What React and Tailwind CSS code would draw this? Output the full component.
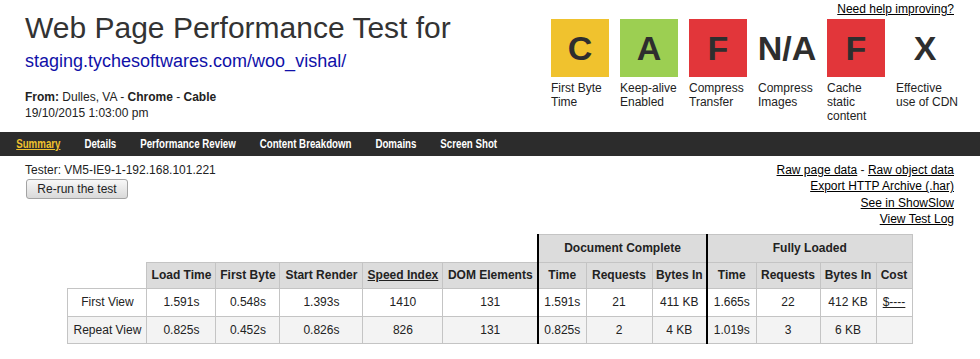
const grades = [
  { letter: 'C', bg: 'bg-[#f0c22e]', label: ['First Byte', 'Time'] },
  { letter: 'A', bg: 'bg-[#9ccf52]', label: ['Keep-alive', 'Enabled'] },
  { letter: 'F', bg: 'bg-[#e2363a]', label: ['Compress', 'Transfer'] },
  { letter: 'N/A', bg: '', label: ['Compress', 'Images'] },
  { letter: 'F', bg: 'bg-[#e2363a]', label: ['Cache', 'static', 'content'] },
  { letter: 'X', bg: '', label: ['Effective', 'use of CDN'] },
]

const tabs = ['Summary', 'Details', 'Performance Review', 'Content Breakdown', 'Domains', 'Screen Shot']

const rows = [
  {
    name: 'First View',
    bg: 'bg-white',
    h: 'h-[28px]',
    cells: ['1.591s', '0.548s', '1.393s', '1410', '131', '1.591s', '21', '411 KB', '1.665s', '22', '412 KB'],
    cost: true,
  },
  {
    name: 'Repeat View',
    bg: 'bg-[#f3f3f3]',
    h: 'h-[27px]',
    cells: ['0.825s', '0.452s', '0.826s', '826', '131', '0.825s', '2', '4 KB', '1.019s', '3', '6 KB'],
    cost: false,
  },
]

const widths = [79, 69, 64, 83, 80, 95, 48, 66, 55, 49, 64, 56, 36]

function cellBorder(i) {
  // thick black line in front of Document Complete and Fully Loaded
  if (i === 5 || i === 8) return 'border border-[#c4c4c4] border-l-2 border-l-black'
  return 'border border-[#c4c4c4]'
}

export default function App() {
  return (
    <div className="w-[980px] h-[359px] overflow-hidden bg-white text-[12px] text-[#222] font-['Liberation_Sans',Arial,sans-serif]">
      {/* header */}
      <div className="flex justify-between pl-[25px] pr-[26px]">
        <div>
          <h1 className="mt-[11px] text-[30px] leading-[34px] text-[#333] font-normal">Web Page Performance Test for</h1>
          <a className="block mt-[5px] text-[18px] leading-[22px] text-[#1010a8]">staging.tychesoftwares.com/woo_vishal/</a>
          <div className="mt-[17px] leading-[16px]">
            <div>
              <b>From:</b> Dulles, VA - <b>Chrome</b> - <b>Cable</b>
            </div>
            <div>19/10/2015 1:03:00 pm</div>
          </div>
        </div>
        <div className="w-[403px]">
          <div className="mt-[2px] text-right leading-[14px]">
            <a className="underline text-black">Need help improving?</a>
          </div>
          <div className="mt-[3px] flex gap-[11px]">
            {grades.map((g, i) => (
              <div key={i} className="w-[58px]">
                <div className={`h-[58px] flex items-center justify-center text-[34px] font-bold text-[#2e2e2e] ${g.bg}`}>
                  {g.letter}
                </div>
                <div className="mt-[4px] leading-[14px] whitespace-nowrap">
                  {g.label.map((l, j) => (
                    <div key={j}>{l}</div>
                  ))}
                </div>
              </div>
            ))}
          </div>
        </div>
      </div>

      {/* nav */}
      <div className="mt-[9px] h-[24px] bg-[#2c2c2c] flex items-center overflow-hidden">
        <div className="flex items-center gap-[29.5px] pl-[20px] origin-left scale-x-[0.81] font-bold text-[12px] whitespace-nowrap">
          {tabs.map((t, i) => (
            <a key={t} className={i === 0 ? 'text-[#f0c22e] underline' : 'text-white'}>
              {t}
            </a>
          ))}
        </div>
      </div>

      {/* test info */}
      <div className="flex justify-between pl-[25px] pr-[26px] mt-[6px]">
        <div>
          <div className="leading-[16px]">Tester: VM5-IE9-1-192.168.101.221</div>
          <button className="mt-[1px] ml-[1px] w-[102px] h-[20px] border border-[#a3a3a3] rounded-[3px] bg-gradient-to-b from-[#f8f8f8] to-[#d9d9d9] text-[12px] leading-[18px] text-[#222]">
            Re-run the test
          </button>
        </div>
        <div className="text-right leading-[16.4px]">
          <div>
            <a className="underline text-black">Raw page data</a> - <a className="underline text-black">Raw object data</a>
          </div>
          <div>
            <a className="underline text-black">Export HTTP Archive (.har)</a>
          </div>
          <div>
            <a className="underline text-black">See in ShowSlow</a>
          </div>
          <div>
            <a className="underline text-black">View Test Log</a>
          </div>
        </div>
      </div>

      {/* results table */}
      <table className="mt-[6px] mx-auto table-fixed border-collapse w-[845px] text-[12px]">
        <colgroup>
          {widths.map((w, i) => (
            <col key={i} style={{ width: w }} />
          ))}
        </colgroup>
        <thead>
          <tr className="h-[28px]">
            <th colSpan={6} className="border-0"></th>
            <th colSpan={3} className="bg-[#dcdcdc] border border-[#c4c4c4] border-l-2 border-l-black font-bold">
              Document Complete
            </th>
            <th colSpan={4} className="bg-[#dcdcdc] border border-[#c4c4c4] border-l-2 border-l-black font-bold">
              Fully Loaded
            </th>
          </tr>
          <tr className="h-[26px]">
            <th className="border-0 border-b border-b-[#c4c4c4]"></th>
            {['Load Time', 'First Byte', 'Start Render', 'Speed Index', 'DOM Elements', 'Time', 'Requests', 'Bytes In', 'Time', 'Requests', 'Bytes In', 'Cost'].map(
              (h, i) => (
                <th key={i} className={`bg-[#dcdcdc] font-bold whitespace-nowrap ${cellBorder(i)}`}>
                  {h === 'Speed Index' ? <a className="underline">{h}</a> : h}
                </th>
              ),
            )}
          </tr>
        </thead>
        <tbody>
          {rows.map(r => (
            <tr key={r.name} className={`${r.h} ${r.bg}`}>
              <td className="border border-[#c4c4c4] text-center whitespace-nowrap">{r.name}</td>
              {r.cells.map((c, i) => (
                <td key={i} className={`text-center whitespace-nowrap ${cellBorder(i)}`}>
                  {c}
                </td>
              ))}
              <td className="border border-[#c4c4c4] text-center">
                {r.cost ? <a className="underline">$----</a> : null}
              </td>
            </tr>
          ))}
        </tbody>
      </table>
    </div>
  )
}
